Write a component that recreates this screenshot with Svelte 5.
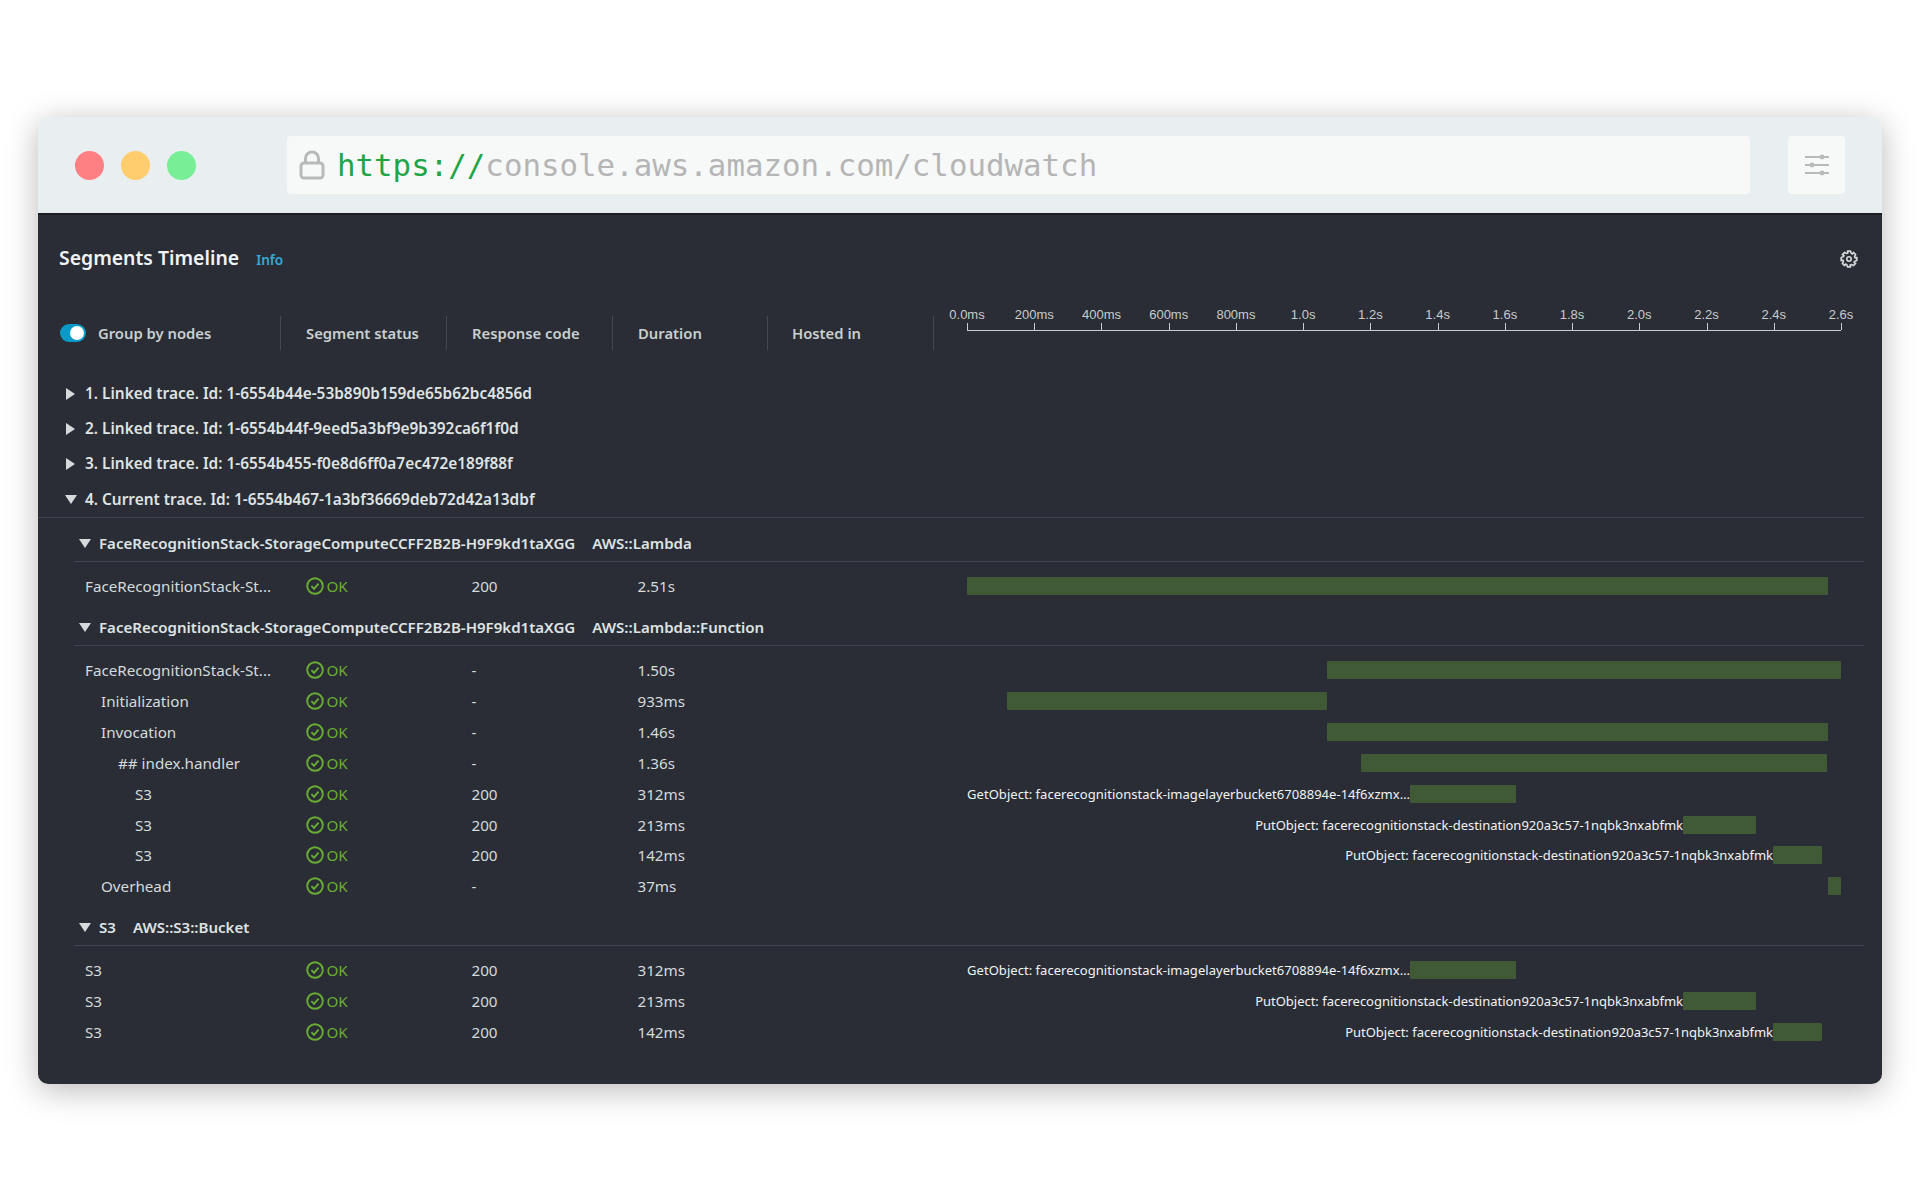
<script>
  // x offsets are px from the 0.0ms tick; the axis runs 874px for 2.6s
  const ticks = ["0.0ms","200ms","400ms","600ms","800ms","1.0s","1.2s","1.4s","1.6s","1.8s","2.0s","2.2s","2.4s","2.6s"];

  const getLabel = "GetObject: facerecognitionstack-imagelayerbucket6708894e-14f6xzmx…";
  const putLabel = "PutObject: facerecognitionstack-destination920a3c57-1nqbk3nxabfmk";

  const traces = [
    "1. Linked trace. Id: 1-6554b44e-53b890b159de65b62bc4856d",
    "2. Linked trace. Id: 1-6554b44f-9eed5a3bf9e9b392ca6f1f0d",
    "3. Linked trace. Id: 1-6554b455-f0e8d6ff0a7ec472e189f88f",
  ];

  const s3Rows = [
    { name: "S3", code: "200", dur: "312ms", from: 443, to: 549, label: getLabel },
    { name: "S3", code: "200", dur: "213ms", from: 716, to: 789, label: putLabel },
    { name: "S3", code: "200", dur: "142ms", from: 806, to: 855, label: putLabel },
  ];

  const groups = [
    {
      name: "FaceRecognitionStack-StorageComputeCCFF2B2B-H9F9kd1taXGG",
      type: "AWS::Lambda",
      rows: [{ name: "FaceRecognitionStack-St...", code: "200", dur: "2.51s", from: 0, to: 861 }],
    },
    {
      name: "FaceRecognitionStack-StorageComputeCCFF2B2B-H9F9kd1taXGG",
      type: "AWS::Lambda::Function",
      rows: [
        { name: "FaceRecognitionStack-St...", code: "-", dur: "1.50s", from: 360, to: 874 },
        { name: "Initialization", depth: 1, code: "-", dur: "933ms", from: 40, to: 360 },
        { name: "Invocation", depth: 1, code: "-", dur: "1.46s", from: 360, to: 861 },
        { name: "## index.handler", depth: 2, code: "-", dur: "1.36s", from: 394, to: 860 },
        ...s3Rows.map((r) => ({ ...r, depth: 3 })),
        { name: "Overhead", depth: 1, code: "-", dur: "37ms", from: 861, to: 874 },
      ],
    },
    { name: "S3", type: "AWS::S3::Bucket", rows: s3Rows },
  ];

  const gearPath = (() => {
    const pts = [];
    for (let i = 0; i < 8; i++) {
      const a = (i * Math.PI) / 4 - Math.PI / 2;
      for (const [off, r] of [[-0.2, 8], [0.2, 8], [0.36, 6.1], [0.6, 6.1]]) {
        pts.push(`${(9 + r * Math.cos(a + off)).toFixed(2)} ${(9 + r * Math.sin(a + off)).toFixed(2)}`);
      }
    }
    return "M" + pts.join("L") + "Z";
  })();
</script>

<div class="stage">
  <div class="window">
    <div class="toolbar">
      <div class="lights">
        <span class="light red"></span>
        <span class="light yellow"></span>
        <span class="light green"></span>
      </div>
      <div class="urlbar">
        <svg class="lock" width="26" height="30" viewBox="0 0 26 30" fill="none" stroke="#b9b9b9" stroke-width="3">
          <rect x="2" y="13" width="22" height="15" rx="3" />
          <path d="M6.5 13V8.5a6.5 6.5 0 0 1 13 0V13" />
        </svg>
        <span class="url"><span class="scheme">https://</span>console.aws.amazon.com/cloudwatch</span>
      </div>
      <div class="tune">
        <svg width="26" height="22" viewBox="0 0 26 22" stroke="#b9b9b9" stroke-width="2" fill="#b9b9b9">
          <path d="M1 3h24M1 11h24M1 19h24" />
          <circle cx="18" cy="3" r="2.4" stroke="none" />
          <circle cx="8" cy="11" r="2.4" stroke="none" />
          <circle cx="18" cy="19" r="2.4" stroke="none" />
        </svg>
      </div>
    </div>

    <div class="panel">
      <div class="title-row">
        <h2>Segments Timeline</h2>
        <span class="info">Info</span>
        <svg class="gear" width="18" height="18" viewBox="0 0 18 18" fill="none" stroke="#d5dbdb" stroke-width="1.6" stroke-linejoin="round">
          <path d={gearPath} />
          <circle cx="9" cy="9" r="2.2" />
        </svg>
      </div>

      <div class="head-row">
        <div class="head-cell first">
          <span class="toggle"><span class="knob"></span></span>
          <span>Group by nodes</span>
        </div>
        <div class="head-cell">Segment status</div>
        <div class="head-cell">Response code</div>
        <div class="head-cell">Duration</div>
        <div class="head-cell last">Hosted in</div>
        <div class="axis">
          {#each ticks as t, i}
            <div class="tick" style="left: {(i / (ticks.length - 1)) * 100}%"><span>{t}</span></div>
          {/each}
        </div>
      </div>

      <div class="traces">
        {#each traces as t}
          <div class="trace"><i class="tri right"></i><span>{t}</span></div>
        {/each}
        <div class="trace"><i class="tri down"></i><span>4. Current trace. Id: 1-6554b467-1a3bf36669deb72d42a13dbf</span></div>
      </div>

      {#each groups as g}
        <section class="group">
          <div class="group-head">
            <i class="tri down"></i>
            <span>{g.name}</span>
            <span class="gtype">{g.type}</span>
          </div>
          <div class="rows">
            {#each g.rows as r}
              <div class="row">
                <div class="name depth{r.depth ?? 0}">{r.name}</div>
                <div class="status">
                  <svg width="18" height="18" viewBox="0 0 18 18" fill="none" stroke="#69ae34" stroke-width="1.9">
                    <circle cx="9" cy="9" r="7.8" />
                    <path d="M5.4 9.2l2.6 2.6 4.6-5.2" />
                  </svg>
                  <span>OK</span>
                </div>
                <div>{r.code}</div>
                <div>{r.dur}</div>
                <div class="lane">
                  <div class="bar" style="left: {r.from}px; width: {r.to - r.from}px">
                    {#if r.label}<span class="barlabel" class:get={r.label === getLabel}>{r.label}</span>{/if}
                  </div>
                </div>
              </div>
            {/each}
          </div>
        </section>
      {/each}
    </div>
  </div>
</div>

<style>
  :global(body) {
    margin: 0;
    background: #fff;
  }
  .stage {
    padding: 117px 38px 116px;
    font-family: "Noto Sans", "Open Sans", sans-serif;
  }
  .window {
    border-radius: 10px;
    overflow: hidden;
    box-shadow: 0 6px 32px rgba(0, 0, 0, 0.28);
  }
  .toolbar {
    height: 96px;
    box-sizing: border-box;
    background: #e9eef1;
    display: flex;
    align-items: center;
    padding-left: 37px;
  }
  .lights {
    display: flex;
    gap: 17px;
    width: 212px;
  }
  .light {
    width: 29px;
    height: 29px;
    border-radius: 50%;
  }
  .red { background: #ff8082; }
  .yellow { background: #ffcc6e; }
  .green { background: #78ee96; }
  .urlbar {
    width: 1463px;
    height: 58px;
    background: #f6f9f8;
    border-radius: 4px;
    display: flex;
    align-items: center;
    padding-left: 12px;
    box-sizing: border-box;
  }
  .lock {
    flex: none;
    margin-right: 12px;
  }
  .url {
    font-family: "DejaVu Sans Mono", monospace;
    font-size: 30.8px;
    color: #b5b5b5;
  }
  .scheme { color: #1fa546; }
  .tune {
    margin-left: 38px;
    width: 57px;
    height: 58px;
    background: #f6f9f8;
    border-radius: 4px;
    display: flex;
    align-items: center;
    justify-content: center;
  }

  .panel {
    background: #2a2d35;
    border-top: 2px solid #1b1d23;
    height: 871px;
    box-sizing: border-box;
    color: #d5dbdb;
    font-size: 15.2px;
  }
  .title-row {
    height: 88px;
    display: flex;
    align-items: center;
    padding: 0 24px 0 21px;
  }
  h2 {
    margin: 0 0 4px;
    font-size: 19.4px;
    font-weight: 600;
    color: #f2f3f3;
  }
  .info {
    margin-left: 17px;
    font-size: 13.6px;
    font-weight: 600;
    color: #37a8d4;
  }
  .gear { margin-left: auto; }

  .head-row {
    height: 60px;
    display: flex;
    align-items: center;
    padding-left: 22px;
    font-weight: 600;
    font-size: 14.8px;
    color: #c9cfcf;
  }
  .head-cell {
    height: 34px;
    display: flex;
    align-items: center;
    box-sizing: border-box;
    width: 166px;
    padding-left: 25px;
    border-right: 1px solid #444851;
    flex: none;
  }
  .head-cell.first {
    width: 221px;
    padding-left: 0;
    gap: 12px;
  }
  .head-cell.last { padding-left: 24px; width: 166px; }
  .head-cell:nth-child(4) { width: 155px; }
  .toggle {
    width: 26px;
    height: 18px;
    border-radius: 9px;
    background: #0a9ac8;
    position: relative;
    flex: none;
  }
  .knob {
    position: absolute;
    right: 2px;
    top: 2px;
    width: 14px;
    height: 14px;
    border-radius: 50%;
    background: #fff;
  }
  .axis {
    position: relative;
    margin-left: 33px;
    width: 874px;
    height: 60px;
    font-family: "Liberation Sans", Arial, sans-serif;
    font-weight: 400;
    font-size: 13px;
    color: #c8cccc;
  }
  .axis::after {
    content: "";
    position: absolute;
    left: 0;
    right: 0;
    top: 27px;
    height: 1px;
    background: #c8cccc;
  }
  .tick {
    position: absolute;
    top: 20px;
    width: 1px;
    height: 7px;
    background: #c8cccc;
  }
  .tick span {
    position: absolute;
    bottom: 7px;
    left: 0;
    transform: translateX(-50%);
    line-height: 16px;
  }

  .traces {
    padding: 13px 0 0 22px;
    margin-right: 18px;
    border-bottom: 1px solid #414550;
    font-weight: 600;
    font-size: 15.4px;
    color: #dfe3e3;
  }
  .trace {
    height: 35.2px;
    display: flex;
    align-items: center;
  }
  .tri {
    display: inline-block;
    width: 0;
    height: 0;
    flex: none;
  }
  .tri.right {
    margin: 0 10px 0 6px;
    border-top: 6px solid transparent;
    border-bottom: 6px solid transparent;
    border-left: 9.5px solid #d5dbdb;
  }
  .tri.down {
    margin: 0 8px 0 5px;
    border-left: 6px solid transparent;
    border-right: 6px solid transparent;
    border-top: 9.5px solid #d5dbdb;
  }

  .group { margin: 0 18px 0 36px; }
  .group-head {
    height: 44px;
    padding-top: 8px;
    box-sizing: border-box;
    display: flex;
    align-items: center;
    border-bottom: 1px solid #414550;
    font-weight: 600;
    color: #dfe3e3;
    font-size: 15.05px;
  }
  .gtype { margin-left: 17px; }
  .rows { padding: 9px 0 0; }
  .row {
    height: 30.9px;
    display: grid;
    grid-template-columns: 220.5px 166px 166px 329.5px 1fr;
    align-items: center;
    margin-left: 11px;
    margin-right: -22px;
  }
  .name { white-space: nowrap; }
  .depth1 { padding-left: 16px; }
  .depth2 { padding-left: 33px; }
  .depth3 { padding-left: 50px; }
  .status {
    display: flex;
    align-items: center;
    gap: 3px;
    color: #69ae34;
  }
  .lane {
    position: relative;
    height: 18px;
    width: 874px;
  }
  .bar {
    position: absolute;
    top: 0;
    height: 18px;
    background: #405a38;
    border-radius: 1px;
  }
  .barlabel {
    position: absolute;
    right: 100%;
    top: 0;
    line-height: 18px;
    font-size: 13px;
    letter-spacing: -0.015px;
    white-space: nowrap;
    color: #f2f3f3;
  }
  .barlabel.get { letter-spacing: 0.03px; }
</style>
